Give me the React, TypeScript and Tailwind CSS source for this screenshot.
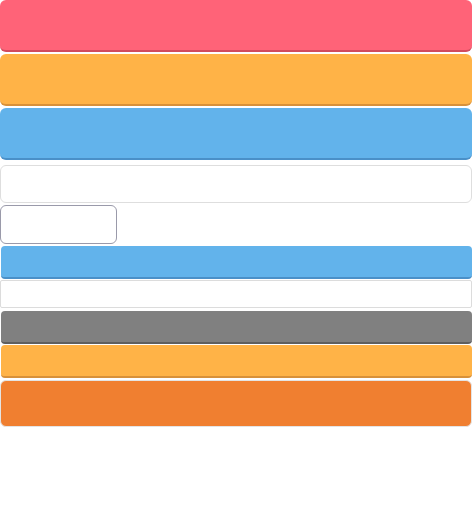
import React from 'react';

const Bar: React.FC<{ className: string }> = ({ className }) => (
  <div className={className} />
);

export default function App() {
  return (
    <div className="w-[472px] h-[509px] bg-white flex flex-col" style={{ fontFamily: '"Liberation Sans", sans-serif' }}>
      {/* big buttons */}
      <Bar className="h-[52px] rounded-[6px] bg-[#ff6378] border-b-2 border-[#d24b5e]" />
      <Bar className="mt-[2px] h-[52px] rounded-[6px] bg-[#ffb347] border-b-2 border-[#d8913a]" />
      <Bar className="mt-[2px] h-[52px] rounded-[6px] bg-[#62b3eb] border-b-2 border-[#4a90c8]" />

      {/* input */}
      <Bar className="mt-[5px] h-[38px] rounded-[6px] bg-white border border-[#dedede]" />
      <Bar className="mt-[2px] w-[117px] h-[39px] rounded-[6px] bg-white border border-[#9a9aaa]" />

      {/* small buttons */}
      <Bar className="mt-[2px] ml-px h-[33px] rounded-[4px] bg-[#62b3eb] border-b-2 border-[#4a90c8]" />
      <Bar className="mt-[1px] h-[28px] rounded-[2px] bg-white border border-[#dcdcdc]" />
      <Bar className="mt-[3px] ml-px h-[33px] rounded-[4px] bg-[#808080] border-b-2 border-[#5f5f5f]" />
      <Bar className="mt-[1px] ml-px h-[33px] rounded-[4px] bg-[#ffb347] border-b-2 border-[#d8913a]" />
      <Bar className="mt-[2px] h-[47px] rounded-[6px] bg-[#f07f30] border border-[#e4e4e4]" />
    </div>
  );
}
